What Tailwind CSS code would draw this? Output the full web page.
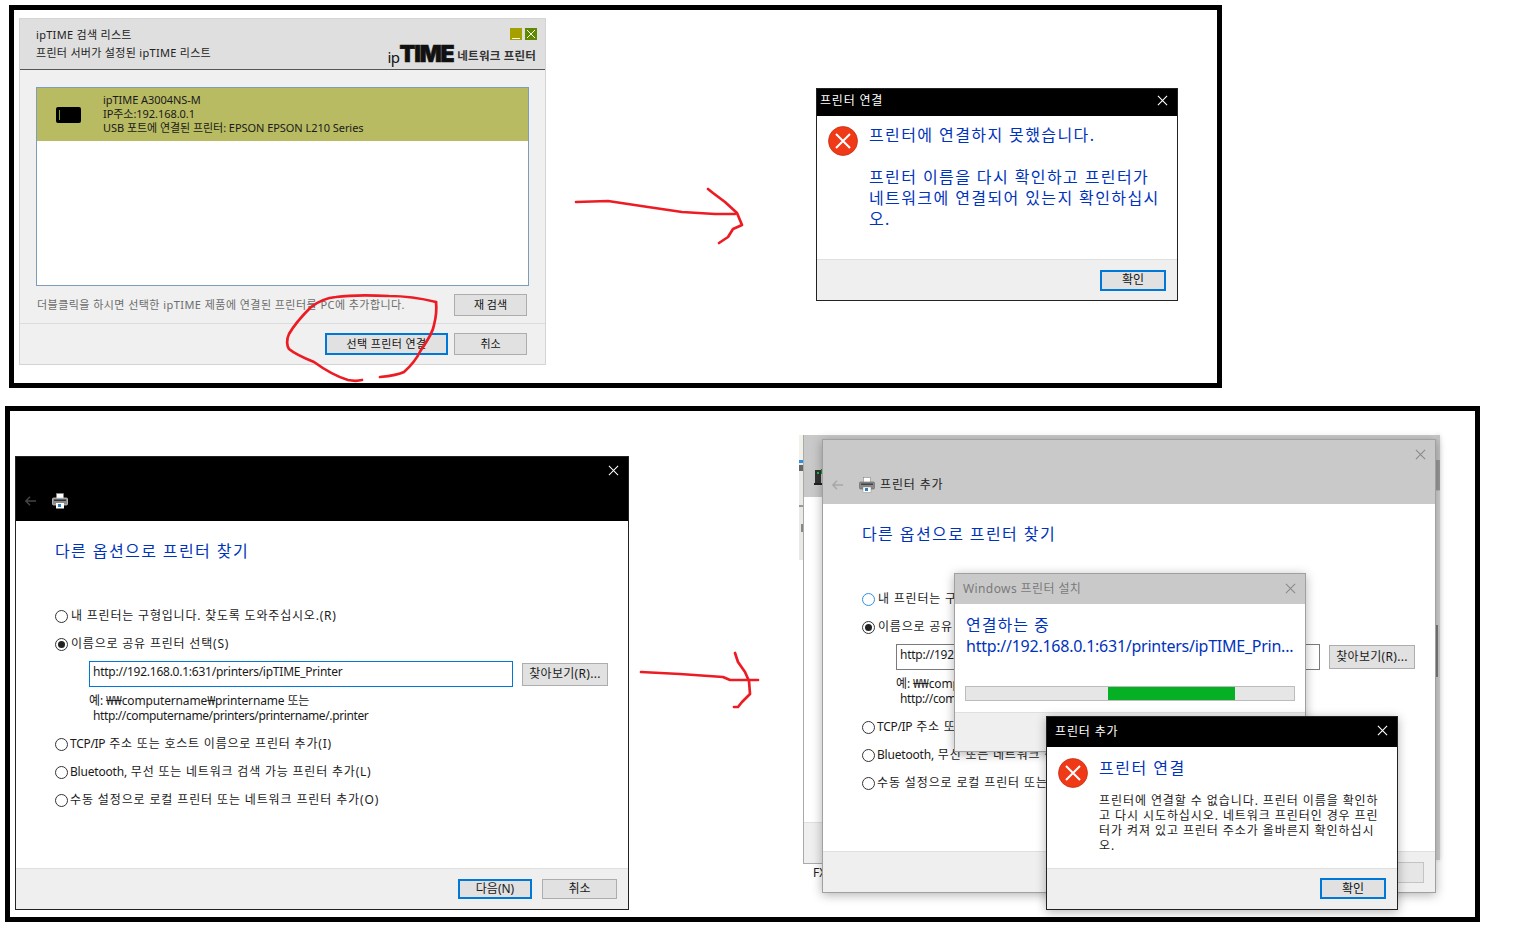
<!DOCTYPE html>
<html lang="ko">
<head>
  <meta charset="UTF-8" />
  <title>프린터 연결 오류</title>
  <script src="https://cdn.jsdelivr.net/npm/@tailwindcss/browser@4"></script>
</head>
<body class="bg-white [font-family:'Noto_Sans','Noto_Sans_CJK_KR',sans-serif]">
<div class="relative w-[1536px] h-[929px] overflow-hidden bg-white">

  <!-- frames -->
  <div class="absolute left-[9px] top-[5px] w-[1213px] h-[383px] border-[5px] border-black"></div>
  <div class="absolute left-[5px] top-[406px] w-[1475px] h-[516px] border-[5px] border-black"></div>

  <!-- ipTIME list window -->
  <div class="absolute left-[19px] top-[18px] w-[527px] h-[347px] border border-[#d4d4d4] bg-[#f0f0f0] flex flex-col">
    <div class="relative h-[51px] bg-[#dfdfdf] border-b border-[#555] pl-[16px] pt-[7px] text-[11px] leading-[18px] text-[#222] tracking-[0.3px] shrink-0">
      <p>ipTIME 검색 리스트</p>
      <p>프린터 서버가 설정된 ipTIME 리스트</p>
      <div class="absolute right-[8px] top-[9px] flex gap-[3px]">
        <div class="w-[12px] h-[12px] bg-[#a3a000] flex items-end justify-center pb-[1px]"><div class="w-[8px] h-px bg-white"></div></div>
        <div class="w-[12px] h-[12px] bg-[#5f8a00]">
          <svg viewBox="0 0 12 12" class="w-[12px] h-[12px]"><path d="M2 2 L10 10 M10 2 L2 10" stroke="#fff" stroke-width="1" fill="none"/></svg>
        </div>
      </div>
      <div class="absolute right-[9px] top-[25px] flex items-end h-[22px] leading-none text-[#111]">
        <span class="text-[15px] tracking-[-0.5px] mb-[1px]">ip</span>
        <span class="[font-family:'Inter',sans-serif] font-black text-[23px] tracking-[-1.2px] [-webkit-text-stroke:0.6px_#111] mr-[4px]">TIME</span>
        <span class="text-[11.5px] font-bold text-[#333] tracking-[0.2px] mb-[5px]">네트워크 프린터</span>
      </div>
    </div>
    <div class="mx-[16px] mt-[17px] h-[199px] border border-[#7f9db9] bg-white shrink-0">
      <div class="h-[53px] bg-[#b8bb62] flex items-center text-[11px] leading-[14px] text-[#1a1a1a]">
        <div class="ml-[19px] w-[25px] h-[16px] bg-black rounded-[2px] flex items-center pl-[3px]">
          <div class="w-[1px] h-[10px] bg-[#8aa000]"></div>
        </div>
        <div class="ml-[22px] -mt-[2px] tracking-[-0.05px]">
          <p>ipTIME A3004NS-M</p>
          <p>IP주소:192.168.0.1</p>
          <p>USB 포트에 연결된 프린터: EPSON EPSON L210 Series</p>
        </div>
      </div>
    </div>
    <div class="flex items-center justify-between h-[22px] mt-[8px] ml-[17px] mr-[18px] shrink-0">
      <p class="text-[11px] text-[#6d6d6d] tracking-[0.45px]">더블클릭을 하시면 선택한 ipTIME 제품에 연결된 프린터를 PC에 추가합니다.</p>
      <button class="w-[73px] h-[22px] border border-[#adadad] bg-[#e1e1e1] text-[11px] leading-none text-[#111] pb-[2px]">재 검색</button>
    </div>
    <div class="flex-1 mt-[7px] border-t border-[#dcdcdc] flex justify-end items-start pt-[9px] pr-[18px] gap-[6px]">
      <button class="w-[123px] h-[22px] border-2 border-[#0078d7] bg-[#e1e1e1] text-[11px] leading-none text-[#111] tracking-[0.4px] pb-[1px]">선택 프린터 연결</button>
      <button class="w-[73px] h-[22px] border border-[#adadad] bg-[#e1e1e1] text-[11px] leading-none text-[#111] pb-[1px]">취소</button>
    </div>
  </div>

  <!-- printer connect failed dialog -->
  <div class="absolute left-[816px] top-[88px] w-[362px] h-[213px] border border-[#222] bg-white flex flex-col">
    <div class="relative h-[27px] bg-black text-white text-[12px] leading-[24px] pl-[3px] tracking-[0.8px] shrink-0">
      프린터 연결
      <svg viewBox="0 0 12 12" class="absolute right-[9px] top-[6px] w-[11px] h-[11px]"><path d="M1 1 L11 11 M11 1 L1 11" stroke="#fff" stroke-width="1.2" fill="none"/></svg>
    </div>
    <div class="flex flex-1 pl-[11px] pt-[9px]">
      <svg viewBox="0 0 30 30" class="w-[30px] h-[30px] mt-[1px] shrink-0"><circle cx="15" cy="15" r="14.5" fill="#f03a17" stroke="#c02a10" stroke-width="0.7"/><path d="M8 8 L22 22 M22 8 L8 22" stroke="#fff" stroke-width="2" fill="none"/></svg>
      <p class="ml-[11px] text-[16px] leading-[21px] text-[#0033bc] tracking-[1.4px]">프린터에 연결하지 못했습니다.<br><br>프린터 이름을 다시 확인하고 프린터가<br>네트워크에 연결되어 있는지 확인하십시<br>오.</p>
    </div>
    <div class="h-[41px] border-t border-[#dfdfdf] bg-[#efefef] flex justify-end items-center pr-[11px] shrink-0">
      <button class="w-[66px] h-[21px] border-2 border-[#0078d7] bg-[#e1e1e1] text-[12px] leading-none text-[#111]">확인</button>
    </div>
  </div>

  <!-- find printer wizard, black title -->
  <div class="absolute left-[15px] top-[456px] w-[614px] h-[454px] border border-[#222] bg-white flex flex-col text-[12px] text-[#1a1a1a]">
    <div class="relative h-[64px] bg-black shrink-0">
      <svg viewBox="0 0 12 12" class="absolute right-[9px] top-[8px] w-[11px] h-[11px]"><path d="M1 1 L11 11 M11 1 L1 11" stroke="#fff" stroke-width="1.1" fill="none"/></svg>
      <div class="flex items-center pt-[36px] pl-[8px] gap-[15px]">
        <svg viewBox="0 0 14 12" class="w-[13px] h-[12px]"><path d="M13 6 H2 M6.5 1.5 L2 6 L6.5 10.5" stroke="#444" stroke-width="1.6" fill="none"/></svg>
        <svg viewBox="0 0 16 16" class="w-[16px] h-[16px]"><rect x="4.5" y="0.5" width="7" height="5" fill="#fff" stroke="#888" stroke-width="0.5"/><rect x="0.5" y="5" width="15" height="7" rx="1" fill="#8a8a8a" stroke="#ccc" stroke-width="0.8"/><rect x="2" y="6.5" width="12" height="1.5" fill="#333"/><rect x="4" y="10" width="8" height="5.5" fill="#fff"/><rect x="6" y="11" width="3" height="3" fill="#2f7fc0"/></svg>
      </div>
    </div>
    <div class="flex-1 pl-[39px] pr-[20px]">
      <h2 class="mt-[18px] h-[24px] text-[16px] leading-[24px] text-[#0033bc] tracking-[1.4px]">다른 옵션으로 프린터 찾기</h2>
      <div class="mt-[39px] flex items-center h-[28px]">
        <span class="w-[13px] h-[13px] rounded-full border border-[#333] bg-white mr-[3px]"></span><span class="tracking-[0.8px]">내 프린터는 구형입니다. 찾도록 도와주십시오.(R)</span>
      </div>
      <div class="flex items-center h-[28px]">
        <span class="w-[13px] h-[13px] rounded-full border border-[#333] bg-white mr-[3px] flex items-center justify-center"><span class="w-[7px] h-[7px] rounded-full bg-[#222]"></span></span><span class="tracking-[0.8px]">이름으로 공유 프린터 선택(S)</span>
      </div>
      <div class="flex items-start gap-[9px] mt-[3px] ml-[34px]">
        <div class="w-[424px] h-[26px] border border-[#0078d7] px-[3px] leading-[20px] tracking-[-0.24px]">http://192.168.0.1:631/printers/ipTIME_Printer</div>
        <button class="w-[86px] h-[23px] mt-[2px] border border-[#adadad] bg-[#e1e1e1] leading-none tracking-[0.3px] pb-[2px]">찾아보기(R)...</button>
      </div>
      <div class="ml-[34px] mt-[6px] leading-[15px] tracking-[-0.38px]">
        <p class="tracking-[-0.15px]">예: ₩₩computername₩printername 또는</p>
        <p class="ml-[4px]">http://computername/printers/printername/.printer</p>
      </div>
      <div class="mt-[7px] flex items-center h-[28px]">
        <span class="w-[13px] h-[13px] rounded-full border border-[#333] bg-white mr-[2px]"></span><span class="tracking-[0.8px]"><span class="tracking-[-0.3px]">TCP/IP</span> 주소 또는 호스트 이름으로 프린터 추가(I)</span>
      </div>
      <div class="flex items-center h-[28px]">
        <span class="w-[13px] h-[13px] rounded-full border border-[#333] bg-white mr-[2px]"></span><span class="tracking-[0.8px]"><span class="tracking-[-0.2px]">Bluetooth,</span> 무선 또는 네트워크 검색 가능 프린터 추가(L)</span>
      </div>
      <div class="flex items-center h-[28px]">
        <span class="w-[13px] h-[13px] rounded-full border border-[#333] bg-white mr-[2px]"></span><span class="tracking-[0.87px]">수동 설정으로 로컬 프린터 또는 네트워크 프린터 추가(O)</span>
      </div>
    </div>
    <div class="h-[41px] border-t border-[#dfdfdf] bg-[#efefef] flex justify-end items-center pr-[11px] gap-[10px] shrink-0">
      <button class="w-[74px] h-[20px] border-2 border-[#0078d7] bg-[#e1e1e1] leading-none">다음(N)</button>
      <button class="w-[75px] h-[20px] border border-[#adadad] bg-[#e1e1e1] leading-none">취소</button>
    </div>
  </div>

  <!-- scraps of what sits behind the wizard -->
  <div class="absolute left-[799px] top-[435px] w-[4px] h-[125px] bg-[#e9e9e6] flex flex-col">
    <div class="h-[25px] bg-[#f2f2ea]"></div>
    <div class="h-[3px] bg-[#2f8fe0]"></div>
    <div class="h-[6px] mt-[2px] bg-[#666]"></div>
    <div class="h-[2px] mt-[34px] bg-[#999]"></div>
    <div class="h-[8px] mt-[17px] w-[2px] ml-[2px] bg-[#888]"></div>
  </div>
  <div class="absolute left-[1436px] top-[435px] w-[4px] h-[425px] bg-[#cfcfcf] flex flex-col shadow-[0_0_4px_rgba(0,0,0,0.15)]">
    <div class="h-[25px] bg-[#c4c4c4]"></div>
    <div class="h-[30px] bg-[#9a9a9a]"></div>
    <div class="h-[135px] bg-[#d2d2d2] border-t border-[#bbb]"></div>
    <div class="h-[52px] w-[2px] bg-[#7d7d7d]"></div>
  </div>

  <!-- window behind the wizard -->
  <div class="absolute left-[803px] top-[435px] w-[633px] h-[429px] border-l border-b border-[#aaa] bg-white flex flex-col">
    <div class="relative h-[62px] bg-[#c9c9c9] shrink-0">
      <svg viewBox="0 0 9 16" class="absolute left-[10px] top-[34px] w-[9px] h-[16px]"><rect x="1" y="1" width="6" height="13" fill="#333"/><rect x="0" y="14" width="8" height="2" fill="#222"/><rect x="3" y="3" width="2" height="2" fill="#1ec03a"/><rect x="7" y="0" width="2" height="5" fill="#1a9a2a"/></svg>
    </div>
    <div class="flex-1"></div>
    <div class="h-[41px] border-t border-[#dfdfdf] bg-[#efefef] shrink-0"></div>
  </div>
  <p class="absolute left-[813px] top-[866px] text-[12px] leading-[14px] text-[#222]">FX</p>

  <!-- find printer wizard, inactive -->
  <div class="absolute left-[822px] top-[439px] w-[614px] h-[454px] border border-[#a0a0a0] bg-white flex flex-col text-[12px] text-[#1a1a1a] shadow-[0_2px_10px_rgba(0,0,0,0.3)]">
    <div class="relative h-[64px] bg-[#c9c9c9] shrink-0">
      <svg viewBox="0 0 12 12" class="absolute right-[9px] top-[9px] w-[11px] h-[11px]"><path d="M1 1 L11 11 M11 1 L1 11" stroke="#888" stroke-width="1.1" fill="none"/></svg>
      <div class="flex items-center pt-[36px] pl-[8px]">
        <svg viewBox="0 0 14 12" class="w-[13px] h-[12px]"><path d="M13 6 H2 M6.5 1.5 L2 6 L6.5 10.5" stroke="#a8a8a8" stroke-width="1.6" fill="none"/></svg>
        <svg viewBox="0 0 16 16" class="w-[16px] h-[16px] ml-[15px]"><rect x="4.5" y="0.5" width="7" height="5" fill="#fff" stroke="#777" stroke-width="0.5"/><rect x="0.5" y="5" width="15" height="7" rx="1" fill="#8a8a8a" stroke="#666" stroke-width="0.6"/><rect x="2" y="6.5" width="12" height="1.5" fill="#444"/><rect x="4" y="10" width="8" height="5.5" fill="#fff" stroke="#777" stroke-width="0.4"/><rect x="6" y="11" width="3" height="3" fill="#2f7fc0"/></svg>
        <span class="ml-[5px] tracking-[0.85px] text-[#222]">프린터 추가</span>
      </div>
    </div>
    <div class="relative flex-1 pl-[39px] pr-[20px]">
      <h2 class="mt-[18px] h-[24px] text-[16px] leading-[24px] text-[#0033bc] tracking-[1.4px]">다른 옵션으로 프린터 찾기</h2>
      <div class="mt-[39px] flex items-center h-[28px]">
        <span class="w-[13px] h-[13px] rounded-full border border-[#2f8fe0] bg-white mr-[3px]"></span><span class="tracking-[0.8px]">내 프린터는 구형입니다. 찾도록 도와주십시오.(R)</span>
      </div>
      <div class="flex items-center h-[28px]">
        <span class="w-[13px] h-[13px] rounded-full border border-[#333] bg-white mr-[3px] flex items-center justify-center"><span class="w-[7px] h-[7px] rounded-full bg-[#222]"></span></span><span class="tracking-[0.8px]">이름으로 공유 프린터 선택(S)</span>
      </div>
      <div class="flex items-start gap-[9px] mt-[3px] ml-[34px]">
        <div class="w-[424px] h-[26px] border border-[#7a7a7a] px-[3px] leading-[20px] tracking-[-0.24px]">http://192.168.0.1:631/printers/ipTIME_Printer</div>
        <button class="w-[86px] h-[24px] mt-[1px] border border-[#adadad] bg-[#e1e1e1] leading-none tracking-[0.3px] pb-[1px]">찾아보기(R)...</button>
      </div>
      <div class="ml-[34px] mt-[6px] leading-[15px] tracking-[-0.38px]">
        <p class="tracking-[-0.15px]">예: ₩₩computername₩printername 또는</p>
        <p class="ml-[4px]">http://computername/printers/printername/.printer</p>
      </div>
      <div class="mt-[7px] flex items-center h-[28px]">
        <span class="w-[13px] h-[13px] rounded-full border border-[#333] bg-white mr-[2px]"></span><span class="tracking-[0.8px]"><span class="tracking-[-0.3px]">TCP/IP</span> 주소 또는 호스트 이름으로 프린터 추가(I)</span>
      </div>
      <div class="flex items-center h-[28px]">
        <span class="w-[13px] h-[13px] rounded-full border border-[#333] bg-white mr-[2px]"></span><span class="tracking-[0.8px]"><span class="tracking-[-0.2px]">Bluetooth,</span> 무선 또는 네트워크 검색 가능 프린터 추가(L)</span>
      </div>
      <div class="flex items-center h-[28px]">
        <span class="w-[13px] h-[13px] rounded-full border border-[#333] bg-white mr-[2px]"></span><span class="tracking-[0.87px]">수동 설정으로 로컬 프린터 또는 네트워크 프린터 추가(O)</span>
      </div>
    </div>
    <div class="h-[41px] border-t border-[#dfdfdf] bg-[#efefef] flex justify-end items-center pr-[11px] shrink-0">
      <div class="w-[75px] h-[21px] border border-[#c4c4c4] bg-[#e6e6e6]"></div>
    </div>
  </div>

  <!-- installing progress window -->
  <div class="absolute left-[954px] top-[573px] w-[352px] h-[179px] border border-[#a0a0a0] bg-white flex flex-col shadow-[0_2px_10px_rgba(0,0,0,0.3)]">
    <div class="relative h-[30px] bg-[#c9c9c9] text-[12px] leading-[29px] pl-[8px] text-[#7a7a7a] tracking-[0.4px] shrink-0">
      Windows 프린터 설치
      <svg viewBox="0 0 12 12" class="absolute right-[9px] top-[9px] w-[11px] h-[11px]"><path d="M1 1 L11 11 M11 1 L1 11" stroke="#888" stroke-width="1.1" fill="none"/></svg>
    </div>
    <div class="h-[108px] pl-[11px] pr-[10px] pt-[10px] shrink-0">
      <p class="text-[16px] leading-[22px] text-[#0033bc] tracking-[1px]">연결하는 중</p>
      <p class="text-[16px] leading-[20px] text-[#0033bc] whitespace-nowrap tracking-[-0.25px]">http://192.168.0.1:631/printers/ipTIME_Prin...</p>
      <div class="relative mt-[30px] -ml-[1px] h-[15px] border border-[#bcbcbc] bg-[#e6e6e6]">
        <div class="absolute left-[142px] top-0 bottom-0 w-[127px] bg-[#06b025]"></div>
      </div>
    </div>
    <div class="flex-1 border-t border-[#dfdfdf] bg-[#efefef]"></div>
  </div>

  <!-- add printer error dialog -->
  <div class="absolute left-[1046px] top-[716px] w-[352px] h-[194px] border border-[#222] bg-white flex flex-col shadow-[0_2px_10px_rgba(0,0,0,0.3)]">
    <div class="relative h-[30px] bg-black text-white text-[12px] leading-[29px] pl-[8px] tracking-[0.85px] shrink-0">
      프린터 추가
      <svg viewBox="0 0 12 12" class="absolute right-[9px] top-[8px] w-[11px] h-[11px]"><path d="M1 1 L11 11 M11 1 L1 11" stroke="#fff" stroke-width="1.2" fill="none"/></svg>
    </div>
    <div class="flex flex-1 pl-[11px] pt-[11px]">
      <svg viewBox="0 0 30 30" class="w-[30px] h-[30px] shrink-0"><circle cx="15" cy="15" r="14.5" fill="#f03a17" stroke="#c02a10" stroke-width="0.7"/><path d="M8 8 L22 22 M22 8 L8 22" stroke="#fff" stroke-width="2" fill="none"/></svg>
      <div class="ml-[11px]">
        <p class="-mt-[1px] text-[16px] leading-[22px] text-[#0033bc] tracking-[1.5px]">프린터 연결</p>
        <p class="mt-[14px] text-[12px] leading-[15px] text-[#1a1a1a] tracking-[0.92px]">프린터에 연결할 수 없습니다. 프린터 이름을 확인하<br>고 다시 시도하십시오. 네트워크 프린터인 경우 프린<br>터가 켜져 있고 프린터 주소가 올바른지 확인하십시<br>오.</p>
      </div>
    </div>
    <div class="h-[41px] border-t border-[#dfdfdf] bg-[#efefef] flex justify-end items-start pt-[9px] pr-[11px] shrink-0">
      <button class="w-[66px] h-[21px] border-2 border-[#0078d7] bg-[#e1e1e1] text-[12px] leading-none text-[#111]">확인</button>
    </div>
  </div>

  <!-- red pen marks -->
  <svg viewBox="0 0 1536 929" class="absolute inset-0 w-[1536px] h-[929px] pointer-events-none" fill="none" stroke="#ed1c24" stroke-width="2.7" stroke-linecap="round" stroke-linejoin="round">
    <path d="M576 202 L608 201 L648 207 L682 212 L715 214 L735 214"/>
    <path d="M708 189 L713 193 L725 202 L737 213 L742 225 L733 229 L728 237 L719 243"/>
    <path d="M436 302 C 420 298 405 296 389 296 C 370 295 350 295 336 297 C 325 298 315 304 311 307 C 300 318 293 327 289 334 C 286 340 287 346 289 349 C 295 354 304 358 314 362 C 325 370 338 377 348 380 C 353 381 358 381 362 380"/>
    <path d="M380 377 C 390 376 398 375 404 372 C 412 365 417 358 421 350 C 428 340 433 332 434 325 C 436 317 437 310 436 302"/>
    <path d="M641 672 L680 674 L723 677 L730 680 L758 680"/>
    <path d="M735 653 L738 662 L745 672 L749 681 L750 694 L742 702 L738 707 L734 707"/>
  </svg>
</div>
</body>
</html>
